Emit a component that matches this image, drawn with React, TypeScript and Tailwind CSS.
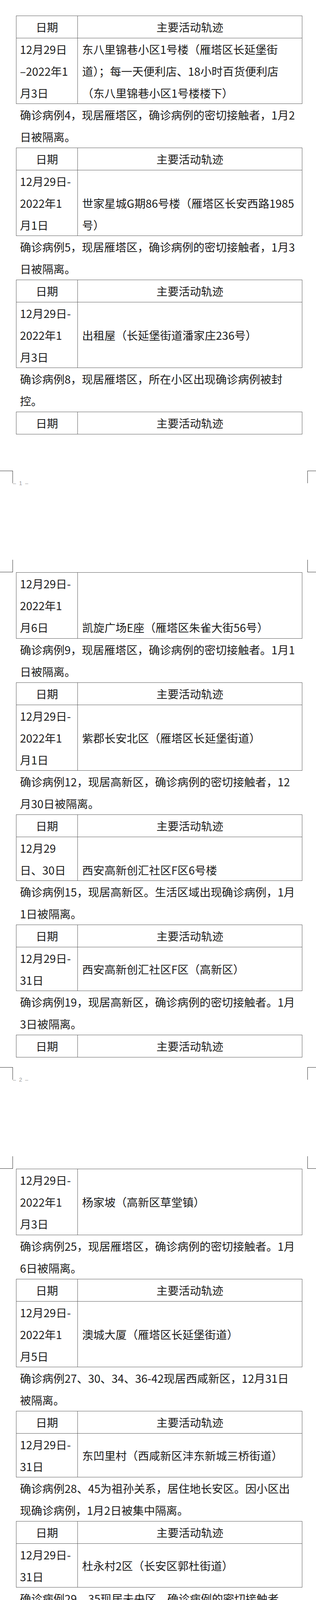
import React from 'react'

type Off = '0' | 'half' | '1' | '2'

type Row = {
  dates: string[]
  acts: string[]
  lines: 1 | 2 | 3
  dateOff?: Off
  actOff?: Off
}

type Block =
  | { kind: 'table'; header?: boolean; rows: Row[] }
  | { kind: 'para'; lines: string[]; edge?: 'top' | 'bottom' }

const padTop: Record<Off, string> = {
  '0': 'pt-0',
  half: 'pt-[28px]',
  '1': 'pt-[56px]',
  '2': 'pt-[112px]',
}

const rowHeight = {
  1: 'h-[56px]',
  2: 'h-[112px]',
  3: 'h-[168px]',
}

const LINE = 'leading-[56px] whitespace-nowrap'

const Table = ({ header, rows }: { header?: boolean; rows: Row[] }) => (
  <div className="border border-[#5c5c5c]">
    {header && (
      <div className="grid grid-cols-[157px_1fr]">
        <div className={`${LINE} border-r border-[#5c5c5c] text-center`}>日期</div>
        <div className={`${LINE} text-center`}>主要活动轨迹</div>
      </div>
    )}
    {rows.map((r, i) => (
      <div
        key={i}
        className={`grid grid-cols-[157px_1fr] ${rowHeight[r.lines]} ${
          header || i > 0 ? 'border-t border-[#5c5c5c]' : ''
        }`}
      >
        <div className={`border-r border-[#5c5c5c] pl-[9px] ${padTop[r.dateOff ?? '0']}`}>
          {r.dates.map((d) => (
            <div key={d} className={LINE}>
              {d}
            </div>
          ))}
        </div>
        <div className={`pl-[11px] ${padTop[r.actOff ?? '0']}`}>
          {r.acts.map((a) => (
            <div key={a} className={LINE}>
              {a}
            </div>
          ))}
        </div>
      </div>
    ))}
  </div>
)

const Para = ({ lines, edge }: { lines: string[]; edge?: 'top' | 'bottom' }) => (
  <div
    className={`pl-[10px] ${edge === 'top' ? 'border-t border-[#5c5c5c]' : ''} ${
      edge === 'bottom' ? 'border-b border-[#5c5c5c]' : ''
    }`}
  >
    {lines.map((l) => (
      <div key={l} className={LINE}>
        {l}
      </div>
    ))}
  </div>
)

const Page = ({ blocks, className }: { blocks: Block[]; className: string }) => (
  <div className={`pl-[41px] overflow-hidden ${className}`}>
    <div className="w-[732px]">
      {blocks.map((b, i) =>
        b.kind === 'table' ? (
          <Table key={i} header={b.header} rows={b.rows} />
        ) : (
          <Para key={i} lines={b.lines} edge={b.edge} />
        )
      )}
    </div>
  </div>
)

// crop marks between two printed pages, with the page number
const PageGap = ({ n }: { n: number }) => (
  <div className="h-[260px] flex flex-col justify-between">
    <div className="flex justify-between">
      <div className="flex items-end">
        <div className="w-[33px] h-[32px] border-t border-r border-[#333]" />
        <span className="mb-[-8px] text-[14px] leading-[16px] tracking-[2px] text-[#9a9a9a] font-['Liberation_Sans',sans-serif]">
          – {n} –
        </span>
      </div>
      <div className="w-[22px] h-[32px] border-t border-l border-[#333]" />
    </div>
    <div className="flex justify-between">
      <div className="w-[33px] h-[32px] border-b border-r border-[#333]" />
      <div className="w-[22px] h-[32px] border-b border-l border-[#333]" />
    </div>
  </div>
)

const page1: Block[] = [
  {
    kind: 'table',
    header: true,
    rows: [
      {
        dates: ['12月29日', '–2022年1', '月3日'],
        acts: ['东八里锦巷小区1号楼（雁塔区长延堡街', '道）；每一天便利店、18小时百货便利店', '（东八里锦巷小区1号楼楼下）'],
        lines: 3,
      },
    ],
  },
  { kind: 'para', lines: ['确诊病例4，现居雁塔区，确诊病例的密切接触者，1月2', '日被隔离。'] },
  {
    kind: 'table',
    header: true,
    rows: [
      {
        dates: ['12月29日-', '2022年1', '月1日'],
        acts: ['世家星城G期86号楼（雁塔区长安西路1985', '号）'],
        lines: 3,
        actOff: '1',
      },
    ],
  },
  { kind: 'para', lines: ['确诊病例5，现居雁塔区，确诊病例的密切接触者，1月3', '日被隔离。'] },
  {
    kind: 'table',
    header: true,
    rows: [
      {
        dates: ['12月29日-', '2022年1', '月3日'],
        acts: ['出租屋（长延堡街道潘家庄236号）'],
        lines: 3,
        actOff: '1',
      },
    ],
  },
  { kind: 'para', lines: ['确诊病例8，现居雁塔区，所在小区出现确诊病例被封', '控。'] },
  { kind: 'table', header: true, rows: [] },
]

const page2: Block[] = [
  {
    kind: 'table',
    rows: [
      {
        dates: ['12月29日-', '2022年1', '月6日'],
        acts: ['凯旋广场E座（雁塔区朱雀大街56号）'],
        lines: 3,
        actOff: '2',
      },
    ],
  },
  { kind: 'para', lines: ['确诊病例9，现居雁塔区，确诊病例的密切接触者。1月1', '日被隔离。'] },
  {
    kind: 'table',
    header: true,
    rows: [
      {
        dates: ['12月29日-', '2022年1', '月1日'],
        acts: ['紫郡长安北区（雁塔区长延堡街道）'],
        lines: 3,
        actOff: '1',
      },
    ],
  },
  { kind: 'para', lines: ['确诊病例12，现居高新区，确诊病例的密切接触者，12', '月30日被隔离。'] },
  {
    kind: 'table',
    header: true,
    rows: [
      {
        dates: ['12月29', '日、30日'],
        acts: ['西安高新创汇社区F区6号楼'],
        lines: 2,
        actOff: '1',
      },
    ],
  },
  { kind: 'para', lines: ['确诊病例15，现居高新区。生活区域出现确诊病例，1月', '1日被隔离。'] },
  {
    kind: 'table',
    header: true,
    rows: [
      {
        dates: ['12月29日-', '31日'],
        acts: ['西安高新创汇社区F区（高新区）'],
        lines: 2,
        actOff: 'half',
      },
    ],
  },
  { kind: 'para', lines: ['确诊病例19，现居高新区，确诊病例的密切接触者。1月', '3日被隔离。'] },
  { kind: 'table', header: true, rows: [] },
]

const page3: Block[] = [
  {
    kind: 'table',
    rows: [
      {
        dates: ['12月29日-', '2022年1', '月3日'],
        acts: ['杨家坡（高新区草堂镇）'],
        lines: 3,
        actOff: '1',
      },
    ],
  },
  { kind: 'para', lines: ['确诊病例25，现居雁塔区，确诊病例的密切接触者。1月', '6日被隔离。'] },
  {
    kind: 'table',
    header: true,
    rows: [
      {
        dates: ['12月29日-', '2022年1', '月5日'],
        acts: ['澳城大厦（雁塔区长延堡街道）'],
        lines: 3,
        actOff: '1',
      },
    ],
  },
  { kind: 'para', lines: ['确诊病例27、30、34、36-42现居西咸新区，12月31日', '被隔离。'] },
  {
    kind: 'table',
    header: true,
    rows: [
      {
        dates: ['12月29日-', '31日'],
        acts: ['东凹里村（西咸新区沣东新城三桥街道）'],
        lines: 2,
        actOff: 'half',
      },
    ],
  },
  { kind: 'para', lines: ['确诊病例28、45为祖孙关系，居住地长安区。因小区出', '现确诊病例，1月2日被集中隔离。'] },
  {
    kind: 'table',
    header: true,
    rows: [
      {
        dates: ['12月29日-', '31日'],
        acts: ['杜永村2区（长安区郭杜街道）'],
        lines: 2,
        actOff: 'half',
      },
    ],
  },
  { kind: 'para', lines: ['确诊病例29、35现居未央区，确诊病例的密切接触者。', '12月31日被隔离。'] },
  { kind: 'table', header: true, rows: [] },
]

const page4: Block[] = [
  {
    kind: 'table',
    rows: [
      {
        dates: ['12月29日-', '31日'],
        acts: ['消防小区家属院（未央区经开区凤城三路24', '号）'],
        lines: 2,
      },
    ],
  },
  { kind: 'para', lines: ['确诊病例31，现居西咸新区，确诊病例的密切接触者。', '12月31日被隔离。'] },
  {
    kind: 'table',
    header: true,
    rows: [
      {
        dates: ['12月29日-', '31日'],
        acts: ['后卫馨佳苑小区（西咸新区沣东新城三桥街', '道）'],
        lines: 2,
      },
    ],
  },
  { kind: 'para', lines: ['确诊病例32，现居西咸新区，确诊病例的密切接触者。', '12月31日被隔离。'] },
  {
    kind: 'table',
    header: true,
    rows: [
      {
        dates: ['12月29日-', '31日'],
        acts: ['和平春天小区（沣东新城）'],
        lines: 2,
        actOff: 'half',
      },
      {
        dates: ['12月30日'],
        acts: ['和平村奥斯特酒店（沣东新城天台路与红光', '路十字向南200米）'],
        lines: 2,
        dateOff: 'half',
      },
    ],
  },
  { kind: 'para', lines: ['确诊病例33，现居西咸新区，确诊病例的密切接触者。', '12月31日被隔离。'] },
  {
    kind: 'table',
    header: true,
    rows: [
      {
        dates: ['12月29日-', '30日'],
        acts: ['三桥街道三桥路139号'],
        lines: 2,
        actOff: 'half',
      },
      {
        dates: ['12月29日-', '31日'],
        acts: ['园丁苑小区（西咸新区沣东新城三桥武警', '路）、未央区红光路社区'],
        lines: 2,
      },
    ],
  },
  { kind: 'para', lines: ['确诊病例44，现居高新区，确诊病例的密切接触者。1月'], edge: 'bottom' },
]

const page5: Block[] = [
  { kind: 'para', lines: ['4日被隔离。'], edge: 'top' },
  {
    kind: 'table',
    header: true,
    rows: [
      {
        dates: ['12月29日-', '2022年1', '月3日'],
        acts: ['冠诚国际2单元（唐延路中段科技六路北39', '号）'],
        lines: 3,
        actOff: 'half',
      },
    ],
  },
]

export default function App() {
  return (
    <div className="w-[808px] bg-white text-[28.5px] text-[#1c1c1c] font-['Noto_Sans_CJK_SC',sans-serif]">
      <Page blocks={page1} className="h-[1205px] pt-[40px]" />
      <PageGap n={1} />
      <Page blocks={page2} className="h-[1267px]" />
      <PageGap n={2} />
      <Page blocks={page3} className="h-[1267px]" />
      <PageGap n={3} />
      <Page blocks={page4} className="h-[1267px]" />
      <PageGap n={4} />
      <Page blocks={page5} className="h-[316px]" />
    </div>
  )
}
